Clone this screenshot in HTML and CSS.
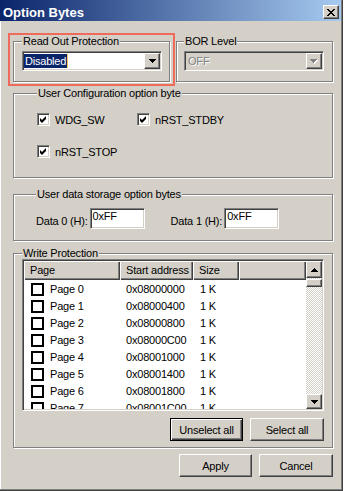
FILE: index.html
```html
<!DOCTYPE html>
<html lang="en">
<head>
  <meta charset="UTF-8" />
  <meta name="viewport" content="width=device-width, initial-scale=1.0"/>
  <title>Option Bytes</title>
  <link rel="stylesheet" href="styles.css">
</head>
<body>
  <div class="window">
    <div class="titlebar">
      <span class="title">Option Bytes</span>
      <button class="close-btn raised">
        <svg width="8" height="7" viewBox="0 0 8 7" shape-rendering="crispEdges"><path fill="#000" d="M0 0h2v1H0z M6 0h2v1H6z M1 1h2v1H1z M5 1h2v1H5z M2 2h4v1H2z M3 3h2v1H3z M2 4h4v1H2z M1 5h2v1H1z M5 5h2v1H5z M0 6h2v1H0z M6 6h2v1H6z"/></svg>
      </button>
    </div>

    <div class="content">
      <div class="top-row">
        <div class="highlight">
          <fieldset class="group group-rop">
            <legend>Read Out Protection</legend>
            <div class="combo">
              <span class="combo-value"><span class="selected">Disabled</span></span>
              <span class="combo-btn raised">
                <svg width="7" height="4" viewBox="0 0 7 4" shape-rendering="crispEdges"><path fill="#000" d="M0 0h7v1H0z M1 1h5v1H1z M2 2h3v1H2z M3 3h1v1H3z"/></svg>
              </span>
            </div>
          </fieldset>
        </div>
        <fieldset class="group group-bor">
          <legend>BOR Level</legend>
          <div class="combo disabled">
            <span class="combo-value">OFF</span>
            <span class="combo-btn raised">
              <svg width="8" height="5" viewBox="0 0 8 5" shape-rendering="crispEdges"><path fill="#fff" d="M1 1h7v1H1z M2 2h5v1H2z M3 3h3v1H3z M4 4h1v1H4z"/><path fill="#808080" d="M0 0h7v1H0z M1 1h5v1H1z M2 2h3v1H2z M3 3h1v1H3z"/></svg>
            </span>
          </div>
        </fieldset>
      </div>

      <fieldset class="group group-config">
        <legend>User Configuration option byte</legend>
        <div class="check-grid">
          <label class="check"><span class="box"><svg width="9" height="9" viewBox="2 2 9 9"><path fill="#000" d="M3 5 L5 7 L9 3 L9 6 L5 10 L3 8 Z"/></svg></span>WDG_SW</label>
          <label class="check"><span class="box"><svg width="9" height="9" viewBox="2 2 9 9"><path fill="#000" d="M3 5 L5 7 L9 3 L9 6 L5 10 L3 8 Z"/></svg></span>nRST_STDBY</label>
          <label class="check"><span class="box"><svg width="9" height="9" viewBox="2 2 9 9"><path fill="#000" d="M3 5 L5 7 L9 3 L9 6 L5 10 L3 8 Z"/></svg></span>nRST_STOP</label>
        </div>
      </fieldset>

      <fieldset class="group group-data">
        <legend>User data storage option bytes</legend>
        <div class="data-row">
          <span class="data-label">Data 0 (H):</span>
          <span class="edit">0xFF</span>
          <span class="data-label second">Data 1 (H):</span>
          <span class="edit">0xFF</span>
        </div>
      </fieldset>

      <fieldset class="group group-write">
        <legend>Write Protection</legend>
        <div class="list">
          <div class="list-main">
            <div class="list-head">
              <span>Page</span>
              <span>Start address</span>
              <span>Size</span>
              <span></span>
            </div>
            <div class="list-rows">
              <div class="row"><span class="page"><i class="flat-box"></i>Page 0</span><span>0x08000000</span><span class="size">1 K</span></div>
              <div class="row"><span class="page"><i class="flat-box"></i>Page 1</span><span>0x08000400</span><span class="size">1 K</span></div>
              <div class="row"><span class="page"><i class="flat-box"></i>Page 2</span><span>0x08000800</span><span class="size">1 K</span></div>
              <div class="row"><span class="page"><i class="flat-box"></i>Page 3</span><span>0x08000C00</span><span class="size">1 K</span></div>
              <div class="row"><span class="page"><i class="flat-box"></i>Page 4</span><span>0x08001000</span><span class="size">1 K</span></div>
              <div class="row"><span class="page"><i class="flat-box"></i>Page 5</span><span>0x08001400</span><span class="size">1 K</span></div>
              <div class="row"><span class="page"><i class="flat-box"></i>Page 6</span><span>0x08001800</span><span class="size">1 K</span></div>
              <div class="row"><span class="page"><i class="flat-box"></i>Page 7</span><span>0x08001C00</span><span class="size">1 K</span></div>
            </div>
          </div>
          <div class="scroll">
            <span class="scroll-btn up raised">
              <svg width="7" height="4" viewBox="0 0 7 4" shape-rendering="crispEdges"><path fill="#000" d="M3 0h1v1H3z M2 1h3v1H2z M1 2h5v1H1z M0 3h7v1H0z"/></svg>
            </span>
            <span class="thumb raised"></span>
            <span class="track"></span>
            <span class="scroll-btn down raised">
              <svg width="7" height="4" viewBox="0 0 7 4" shape-rendering="crispEdges"><path fill="#000" d="M0 0h7v1H0z M1 1h5v1H1z M2 2h3v1H2z M3 3h1v1H3z"/></svg>
            </span>
          </div>
        </div>
        <div class="list-buttons">
          <button class="btn default btn-unselect">Unselect all</button>
          <button class="btn raised btn-select">Select all</button>
        </div>
      </fieldset>

      <div class="actions">
        <button class="btn raised btn-apply">Apply</button>
        <button class="btn raised btn-cancel">Cancel</button>
      </div>
    </div>
  </div>
</body>
</html>
```

FILE: styles.css
```css
* {
  box-sizing: border-box;
}

body {
  margin: 0;
  background: #ffffff;
  font-family: "Liberation Sans", Arial, sans-serif;
  font-size: 11px;
  letter-spacing: -0.2px;
  color: #000;
}

.window {
  width: 343px;
  height: 491px;
  background: #d4d0c8;
  border-right: 1px solid #404040;
  border-bottom: 1px solid #404040;
  box-shadow: inset -1px -1px 0 #808080, inset 1px 0 0 #ffffff;
  display: flex;
  flex-direction: column;
}

/* 3d edges */
.raised {
  background: #d4d0c8;
  border: 1px solid;
  border-color: #ffffff #404040 #404040 #ffffff;
  box-shadow: inset -1px -1px 0 #808080;
}

.titlebar {
  height: 21px;
  margin-right: 1px;
  padding: 0 2px 0 3px;
  display: flex;
  align-items: flex-start;
  justify-content: space-between;
  background: linear-gradient(to right, #0a246a, #a6caf0);
}

.title {
  margin-top: 5px;
  line-height: 15px;
  font-size: 13px;
  font-weight: bold;
  letter-spacing: 0;
  color: #fff;
}

.close-btn {
  margin-top: 5px;
  width: 16px;
  height: 14px;
  padding: 0;
  display: flex;
  align-items: center;
  justify-content: center;
}

.content {
  flex: 1;
  padding: 12px 9px 0 13px;
  display: flex;
  flex-direction: column;
}

.top-row {
  display: flex;
  align-items: flex-start;
  margin-left: -5px;
}

.highlight {
  width: 167px;
  height: 53px;
  border: 2px solid #ef6a5a;
  padding: 1px 0 0 3px;
}

.group {
  margin: 0;
  min-width: 0;
  border: 1px solid #808080;
  box-shadow: inset 1px 1px 0 #ffffff, 1px 1px 0 #ffffff;
}

.group legend {
  padding: 0 1px;
  line-height: 11px;
  background: #d4d0c8;
}

.group-rop {
  width: 157px;
  height: 46px;
  padding: 4px 8px 0;
}

.group-bor {
  width: 157px;
  height: 46px;
  margin: 3px 0 0 1px;
  padding: 4px 6px 0 7px;
}

.combo {
  width: 140px;
  height: 20px;
  padding: 1px;
  display: flex;
  background: #fff;
  border: 1px solid;
  border-color: #808080 #ffffff #ffffff #808080;
  box-shadow: inset 1px 1px 0 #404040, inset -1px -1px 0 #d4d0c8;
}

.combo-value {
  flex: 1;
  line-height: 14px;
  padding-top: 1px;
}

.selected {
  display: inline-block;
  padding: 0 1px;
  background: #0a246a;
  color: #fff;
  border-right: 1px solid #f3c35f;
}

.combo-btn {
  width: 16px;
  height: 16px;
  display: flex;
  align-items: center;
  justify-content: center;
}

.combo.disabled {
  background: #d4d0c8;
}

.combo.disabled .combo-value {
  padding-left: 2px;
  color: #808080;
  text-shadow: 1px 1px 0 #fff;
}

.group-config {
  height: 90px;
  margin-top: 2px;
  padding: 14px 8px 0 23px;
}

.check-grid {
  display: grid;
  grid-template-columns: 100px auto;
  grid-auto-rows: 13px;
  row-gap: 19px;
}

.check {
  display: flex;
  align-items: center;
  gap: 5px;
}

.box {
  width: 13px;
  height: 13px;
  padding: 1px;
  background: #fff;
  border: 1px solid;
  border-color: #808080 #ffffff #ffffff #808080;
  box-shadow: inset 1px 1px 0 #404040, inset -1px -1px 0 #d4d0c8;
  display: flex;
}

.box svg {
  display: block;
}

.group-data {
  height: 52px;
  margin-top: 11px;
  padding: 8px 8px 0 22px;
}

.data-row {
  display: flex;
  align-items: flex-start;
  gap: 2px;
}

.data-label {
  margin-top: 7px;
  line-height: 13px;
}

.data-label.second {
  margin-left: 24px;
}

.edit {
  width: 55px;
  height: 21px;
  padding: 1px 2px;
  line-height: 13px;
  background: #fff;
  border: 1px solid;
  border-color: #808080 #ffffff #ffffff #808080;
  box-shadow: inset 1px 1px 0 #404040, inset -1px -1px 0 #d4d0c8;
}

.group-write {
  height: 200px;
  margin-top: 7px;
  padding: 0 8px;
}

.list {
  height: 152px;
  padding: 1px;
  display: flex;
  background: #fff;
  border: 1px solid;
  border-color: #808080 #ffffff #ffffff #808080;
  box-shadow: inset 1px 1px 0 #404040, inset -1px -1px 0 #d4d0c8;
}

.list-main {
  flex: 1;
  display: flex;
  flex-direction: column;
  overflow: hidden;
}

.list-head {
  display: grid;
  grid-template-columns: 96px 73px 46px 1fr;
  height: 19px;
  flex-shrink: 0;
}

.list-head span {
  padding: 2px 0 0 6px;
  line-height: 15px;
  background: #d4d0c8;
  box-shadow: inset 1px 1px 0 #fff, inset -1px -1px 0 #404040, inset -2px -2px 0 #808080;
}

.list-rows {
  padding-top: 1px;
}

.row {
  display: grid;
  grid-template-columns: 96px 73px 46px;
  height: 17px;
  align-items: center;
  line-height: 17px;
}

.row span {
  padding-left: 6px;
}

.row .page {
  display: flex;
  align-items: center;
  gap: 6px;
  padding-left: 7px;
}

.row .size {
  padding-left: 7px;
}

.flat-box {
  width: 13px;
  height: 13px;
  border: 2px solid #000;
  background: #fff;
}

.scroll {
  width: 16px;
  display: flex;
  flex-direction: column;
  background: repeating-conic-gradient(#ffffff 0 25%, #d4d0c8 0 50%) 0 0 / 2px 2px;
}

.scroll-btn {
  display: flex;
  align-items: center;
  justify-content: center;
}

.scroll-btn.up {
  height: 17px;
}

.scroll-btn.down {
  height: 15px;
}

.thumb {
  height: 8px;
  margin-top: 1px;
}

.track {
  flex: 1;
}

.btn {
  height: 23px;
  padding: 0;
  font: inherit;
  letter-spacing: inherit;
  color: #000;
}

.btn.default {
  background: #d4d0c8;
  border: 1px solid #000;
  box-shadow: inset 1px 1px 0 #fff, inset -1px -1px 0 #404040, inset -2px -2px 0 #808080;
}

.list-buttons {
  display: flex;
  justify-content: flex-end;
  gap: 7px;
  margin-top: 7px;
}

.btn-unselect,
.btn-apply {
  width: 73px;
}

.btn-select,
.btn-cancel {
  width: 74px;
}

.actions {
  display: flex;
  justify-content: flex-end;
  gap: 7px;
  margin-top: 6px;
}
```
